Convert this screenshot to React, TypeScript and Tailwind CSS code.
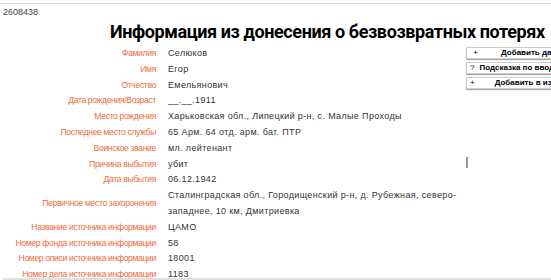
import React from 'react';

const rows: [string, string][] = [
  ['Фамилия', 'Селюков'],
  ['Имя', 'Егор'],
  ['Отчество', 'Емельянович'],
  ['Дата рождения/Возраст', '__.__.1911'],
  ['Место рождения', 'Харьковская обл., Липецкий р-н, с. Малые Проходы'],
  ['Последнее место службы', '65 Арм. 64 отд. арм. бат. ПТР'],
  ['Воинское звание', 'мл. лейтенант'],
  ['Причина выбытия', 'убит'],
  ['Дата выбытия', '06.12.1942'],
  ['Первичное место захоронения', 'Сталинградская обл., Городищенский р-н, д. Рубежная, северо-западнее, 10 км, Дмитриевка'],
  ['Название источника информации', 'ЦАМО'],
  ['Номер фонда источника информации', '58'],
  ['Номер описи источника информации', '18001'],
  ['Номер дела источника информации', '1183'],
];

const buttons = [
  { icon: '+', text: 'Добавить данные', center: true },
  { icon: '?', text: 'Подсказка по вводу данных', center: false },
  { icon: '+', text: 'Добавить в избранное', center: true },
];

export default function App() {
  return (
    <div className="w-[551px] h-[280px] overflow-hidden bg-white relative text-[#333]" style={{ fontFamily: '"Liberation Sans", Arial, sans-serif' }}>
      <div className="h-[4px] border-b border-[#ddd]"></div>
      <div className="pl-[3px] pt-[3px] text-[9px] leading-[11px] text-[#444]">2608438</div>

      <h1
        className="ml-[110px] mt-[2px] whitespace-nowrap text-[18px] leading-[24px] font-bold text-black tracking-[-0.4px]"
        style={{ fontFamily: 'Roboto, sans-serif' }}
      >
        Информация из донесения о безвозвратных потерях
      </h1>

      <div className="flex mt-[2px]">
        <div className="w-[466px] shrink-0">
          {rows.map(([label, value], i) => (
            <div key={i} className="flex items-center text-[9px] leading-[15.8px]">
              <div className="w-[156px] shrink-0 text-right text-[8.6px] tracking-[-0.35px] text-[#f26b3a] whitespace-nowrap">{label}</div>
              <div className="ml-[12px] w-[296px] tracking-[0.35px]">{value}</div>
            </div>
          ))}
        </div>
        <div className="flex flex-col gap-[3px] pt-[1px]">
          {buttons.map((b, i) => (
            <div
              key={i}
              className="w-[110px] h-[12px] flex items-center border border-[#ccc] shadow-[0_1px_1px_#aaa] bg-white text-[8px] font-bold text-black whitespace-nowrap"
            >
              <span className="w-[14px] pl-[3px] text-center font-normal">{b.icon}</span>
              <span className={b.center ? 'pl-[20px]' : 'pl-[5px]'}>{b.text}</span>
            </div>
          ))}
        </div>
      </div>

      <div className="absolute left-[466px] top-[157px] w-[2px] h-[11px] bg-[#999]"></div>
      <div className="absolute left-[3px] right-0 top-[278px] h-[2px] bg-[#e0e0e0]"></div>
    </div>
  );
}
